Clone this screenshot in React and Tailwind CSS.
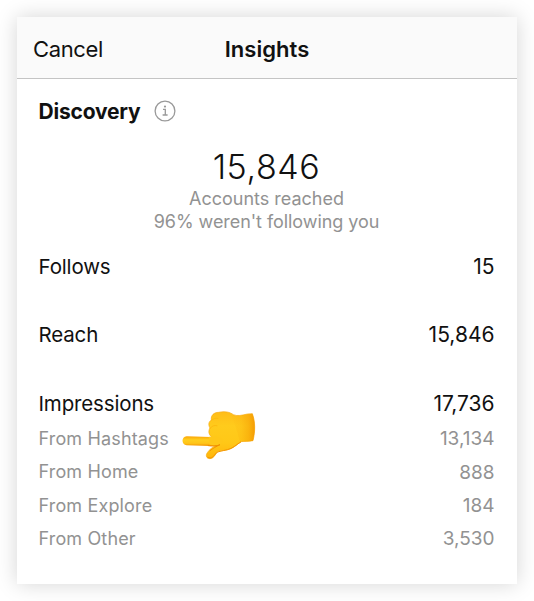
import React from 'react';

const SOURCES = [
  { label: 'From Hashtags', value: '13,134', pointed: true },
  { label: 'From Home', value: '888' },
  { label: 'From Explore', value: '184' },
  { label: 'From Other', value: '3,530' },
];

function InfoIcon() {
  return (
    <svg className="ml-[13.5px] h-[22px] w-[22px]" viewBox="0 0 22 22" fill="none" stroke="#999" strokeWidth="1.3">
      <circle cx="11" cy="11" r="9.9" />
      <path d="M9 9.3h2.3v5.7M8.6 15h5" />
      <circle cx="11" cy="6.6" r="1.1" fill="#999" stroke="none" />
    </svg>
  );
}

function PointingHand() {
  return (
    <svg className="absolute -top-[27px] left-[141px] h-[70px] w-[80px]" viewBox="0 0 240 210">
      <defs>
        <linearGradient id="palm" x1="0" y1="0" x2="0" y2="1">
          <stop offset="0" stopColor="#ffbd18" />
          <stop offset="0.3" stopColor="#ffcb1c" />
          <stop offset="0.65" stopColor="#ffc817" />
          <stop offset="1" stopColor="#ffb50b" />
        </linearGradient>
        <linearGradient id="cuff" x1="0" y1="0" x2="1" y2="0">
          <stop offset="0" stopColor="#f69a00" stopOpacity="0" />
          <stop offset="0.45" stopColor="#f69a00" stopOpacity="0.15" />
          <stop offset="0.75" stopColor="#f49a00" stopOpacity="0.45" />
          <stop offset="1" stopColor="#f29200" stopOpacity="0.8" />
        </linearGradient>
        <linearGradient id="finger" x1="0" y1="0" x2="0" y2="1">
          <stop offset="0" stopColor="#fba506" />
          <stop offset="0.35" stopColor="#ffce1e" />
          <stop offset="0.7" stopColor="#ffc51a" />
          <stop offset="1" stopColor="#f39200" />
        </linearGradient>
      </defs>
      <path
        d="M96 123 C86 117 84 105 90 96 C84 86 86 77 94 72 C92 58 102 49 116 49 C134 45 150 48 160 56 C171 61 186 58 202 54 L217 53 C226 76 226 107 219 134 C205 137 194 135 184 137 C173 143 163 155 148 160 C132 165 120 163 111 168 C105 178 101 187 90 188 C79 188 76 178 82 170 C88 160 98 153 108 149 Z"
        fill="url(#palm)" stroke="#f8a90e" strokeWidth="2"
      />
      <path d="M150 53 C178 63 198 56 217 53 C226 76 226 107 219 134 C205 137 194 135 180 139 C172 110 164 78 150 53Z" fill="url(#cuff)" />
      <path
        d="M20 121 L92 123 C102 123 112 126 118 132 L114 149 C105 152 96 150 88 150 L20 148 C4 147 3 122 20 121Z"
        fill="url(#finger)"
      />
      <path d="M86 123 C96 118 122 122 128 132 C130 142 120 149 108 148 C98 149 94 148 88 145Z" fill="#ffc719" />
      <path d="M90 98 C94 90 103 87 111 89 M94 73 C99 68 108 65 114 67" stroke="#fbb70f" strokeWidth="2.5" fill="none" strokeLinecap="round" />
      <path d="M85 149 C98 152 110 150 120 146 C110 151 98 157 90 164" stroke="#ef8a00" strokeWidth="2.5" fill="none" strokeLinecap="round" strokeLinejoin="round" />
      <path d="M84 184 C94 190 101 181 106 174 C111 166 127 165 142 161 C158 158 170 145 182 138" stroke="#f59700" strokeWidth="3" fill="none" strokeLinecap="round" />
    </svg>
  );
}

export default function App() {
  return (
    <div className="h-[601px] w-[534px] overflow-hidden bg-white p-[17px] font-['Inter',sans-serif] text-[#111]">
      <main className="h-[567px] w-[500px] bg-white shadow-[0_0_20px_rgba(0,0,0,0.17)]">
        <header className="grid h-[62px] grid-cols-[1fr_auto_1fr] items-center border-b border-[#c4c4c4] bg-[#fafafa] px-4 pt-[3px] text-[22px]">
          <span className="tracking-[-0.35px]">Cancel</span>
          <h1 className="text-[22px] font-semibold tracking-[0.05px]">Insights</h1>
        </header>

        <div className="pl-[21.5px] pr-[22.5px]">
          <div className="flex h-[64px] items-center">
            <h2 className="pt-[2px] text-[21px] font-bold tracking-[-0.2px]">Discovery</h2>
            <InfoIcon />
          </div>

          <section className="flex h-[90px] flex-col items-center pt-[3px] text-[#929292]">
            <div className="h-[41px] text-[34px] font-light leading-[41px] tracking-[0.6px] text-[#111]">15,846</div>
            <div className="h-[23px] text-[18px] leading-[23px]">Accounts reached</div>
            <div className="h-[23px] text-[18px] leading-[23px] tracking-[-0.06px]">96% weren't following you</div>
          </section>

          <div className="flex h-[68px] items-center justify-between text-[21px]">
            <span className="text-[20.5px] tracking-[-0.15px]">Follows</span>
            <span>15</span>
          </div>
          <div className="flex h-[69px] items-center justify-between text-[21px]">
            <span className="text-[20.5px] tracking-[-0.15px]">Reach</span>
            <span className="pb-px">15,846</span>
          </div>
          <div className="flex h-[68px] items-center justify-between text-[21px]">
            <span className="text-[20.5px] tracking-[-0.15px]">Impressions</span>
            <span>17,736</span>
          </div>

          <ul className="-mt-[15px]">
            {SOURCES.map(({ label, value, pointed }) => (
              <li key={label} className="relative flex h-[33.3px] items-center justify-between text-[19px] text-[#929292]">
                <span className="pb-[2px] text-[18px] tracking-[0.15px]">{label}</span>
                <span>{value}</span>
                {pointed && <PointingHand />}
              </li>
            ))}
          </ul>
        </div>
      </main>
    </div>
  );
}
